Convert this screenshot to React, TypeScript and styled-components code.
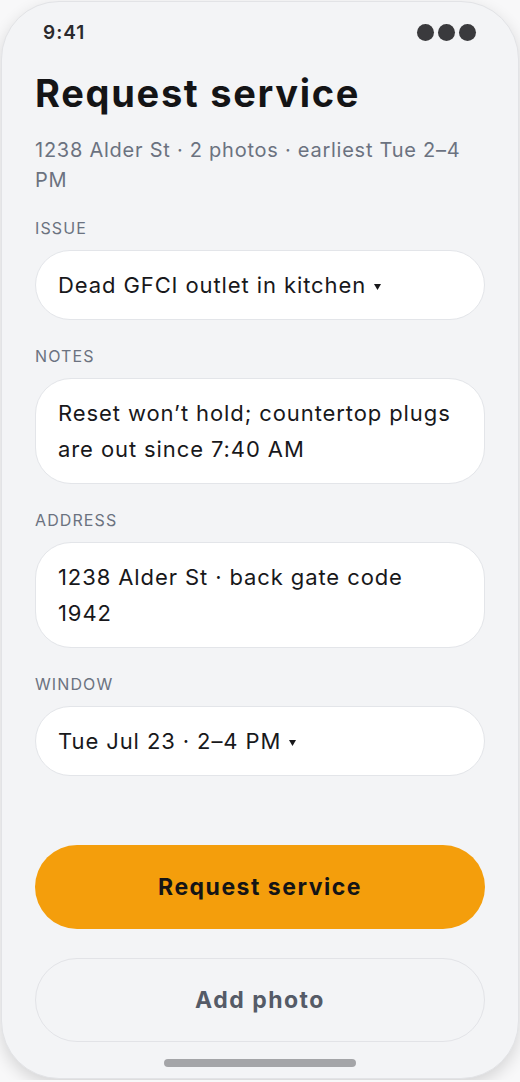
import React from 'react';
import styled, { createGlobalStyle } from 'styled-components';

const GlobalStyle = createGlobalStyle`
  html, body {
    margin: 0;
    padding: 0;
    background: #f8f8f9;
  }
  * {
    box-sizing: border-box;
  }
`;

const Phone = styled.div`
  width: 518px;
  height: 1078px;
  margin: 1px;
  border: 1px solid #e2e3e6;
  border-radius: 58px;
  background: #f3f4f6;
  box-shadow: 0 6px 16px rgba(0, 0, 0, 0.14);
  overflow: hidden;
  display: flex;
  flex-direction: column;
  padding: 0 33px 11px;
  font-family: Inter, 'Noto Sans', sans-serif;
  color: #141416;
`;

const StatusBar = styled.div`
  display: flex;
  align-items: center;
  justify-content: space-between;
  height: 28px;
  margin-top: 16px;
  padding: 0 9px 0 8px;
`;

const Clock = styled.span`
  font-size: 19px;
  font-weight: 600;
  letter-spacing: 1px;
  color: #2a2a2d;
`;

const Dots = styled.div`
  display: flex;
  gap: 4px;
`;

const Dot = styled.span`
  width: 17px;
  height: 17px;
  border-radius: 50%;
  background: #3a3a3d;
`;

const Title = styled.h1`
  margin: 24px 0 0;
  font-size: 38px;
  line-height: 46px;
  font-weight: 700;
  letter-spacing: 1.7px;
  color: #141416;
`;

const Subtitle = styled.p`
  margin: 19px 0 0;
  font-size: 20px;
  line-height: 30px;
  letter-spacing: 0.75px;
  color: #6b7280;
`;

const Form = styled.div`
  display: flex;
  flex-direction: column;
  gap: 26px;
  margin-top: 23px;
`;

const Group = styled.div`
  display: flex;
  flex-direction: column;
  gap: 12px;
`;

const Label = styled.div`
  font-size: 16px;
  line-height: 20px;
  color: #6b7280;
  text-transform: uppercase;
  letter-spacing: 1.1px;
`;

const Field = styled.div`
  background: #ffffff;
  border: 1px solid #e3e5e9;
  border-radius: 36px;
  padding: 16px 22px;
  font-size: 22px;
  line-height: 36px;
  letter-spacing: 0.9px;
  color: #18181b;
`;

const Caret = styled.svg`
  width: 7px;
  height: 6px;
  margin-left: 8px;
  vertical-align: 3px;
`;

const Actions = styled.div`
  margin-top: auto;
  display: flex;
  flex-direction: column;
  gap: 29px;
`;

const Button = styled.button<{ $primary?: boolean }>`
  height: 84px;
  border-radius: 42px;
  font-family: Inter, 'Noto Sans', sans-serif;
  font-size: 23px;
  font-weight: 700;
  letter-spacing: 1.5px;
  cursor: pointer;
  border: ${({ $primary }) => ($primary ? 'none' : '1.5px solid #e2e3e7')};
  background: ${({ $primary }) => ($primary ? '#f49e0c' : 'transparent')};
  color: ${({ $primary }) => ($primary ? '#141416' : '#555b67')};
`;

const HomeBar = styled.div`
  width: 192px;
  height: 8px;
  border-radius: 4px;
  background: #a4a5a8;
  margin: 17px auto 0;
`;

const fields = [
  { label: 'Issue', value: 'Dead GFCI outlet in kitchen', select: true },
  { label: 'Notes', value: 'Reset won’t hold; countertop plugs are out since 7:40 AM' },
  { label: 'Address', value: '1238 Alder St · back gate code 1942' },
  { label: 'Window', value: 'Tue Jul 23 · 2–4 PM', select: true },
];

export default function App() {
  return (
    <>
      <GlobalStyle />
      <Phone>
        <StatusBar>
          <Clock>9:41</Clock>
          <Dots>
            <Dot />
            <Dot />
            <Dot />
          </Dots>
        </StatusBar>
        <Title>Request service</Title>
        <Subtitle>1238 Alder St · 2 photos · earliest Tue 2–4 PM</Subtitle>
        <Form>
          {fields.map((f) => (
            <Group key={f.label}>
              <Label>{f.label}</Label>
              <Field>
                {f.value}
                {f.select && (
                  <Caret viewBox="0 0 7 6">
                    <path d="M0 0h7L3.5 6z" fill="#18181b" />
                  </Caret>
                )}
              </Field>
            </Group>
          ))}
        </Form>
        <Actions>
          <Button $primary>Request service</Button>
          <Button>Add photo</Button>
        </Actions>
        <HomeBar />
      </Phone>
    </>
  );
}
